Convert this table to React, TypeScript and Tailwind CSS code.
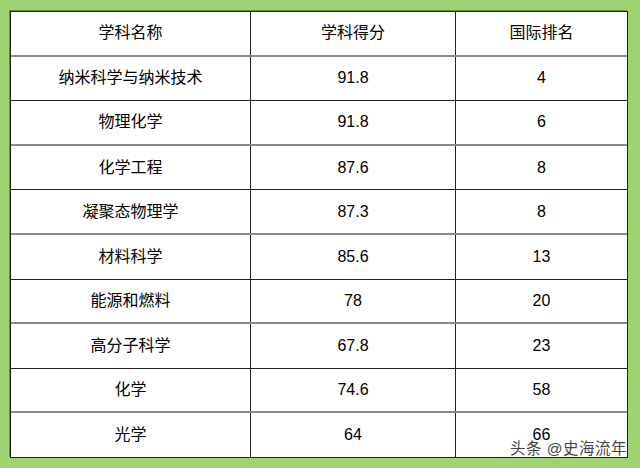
import React from "react";

const rows: [string, string, string][] = [
  ["纳米科学与纳米技术", "91.8", "4"],
  ["物理化学", "91.8", "6"],
  ["化学工程", "87.6", "8"],
  ["凝聚态物理学", "87.3", "8"],
  ["材料科学", "85.6", "13"],
  ["能源和燃料", "78", "20"],
  ["高分子科学", "67.8", "23"],
  ["化学", "74.6", "58"],
  ["光学", "64", "66"],
];

const font = { fontFamily: '"Liberation Sans", "Noto Sans CJK SC", sans-serif' };

function Row({ cells, grey }: { cells: [string, string, string]; grey: boolean }) {
  return (
    <div
      className={
        "flex h-[44.6px] shrink-0 " +
        (grey ? "border-b-2 border-[#8a8a8a]" : "border-b border-[#222]")
      }
    >
      <div className="w-[240px] flex items-center justify-center border-r border-[#222]">
        {cells[0]}
      </div>
      <div className="w-[205px] flex items-center justify-center border-r border-[#222]">
        {cells[1]}
      </div>
      <div className="flex-1 flex items-center justify-center">{cells[2]}</div>
    </div>
  );
}

export default function App() {
  const all: [string, string, string][] = [["学科名称", "学科得分", "国际排名"], ...rows];
  return (
    <div className="w-[640px] h-[468px] bg-[#9fd271] pt-[11px] pl-[10px] relative" style={font}>
      <div className="w-[618px] h-[447px] bg-white border-l border-t border-r border-[#222] flex flex-col text-[16px] text-[#000] overflow-hidden shadow-[-1px_-1px_0_#5f8f3a]">
        {all.map((r, i) => (
          <Row key={i} cells={r} grey={i % 2 === 0} />
        ))}
      </div>
      <div
        className="absolute right-[13px] bottom-[12px] text-[15.5px] leading-none text-[#444] tracking-[0.5px]"
        style={{ ...font, textShadow: "0 0 1px #fff, 0 0 2px #fff, 1px 1px 0 #fff, -1px -1px 0 #fff" }}
      >
        头条 @史海流年
      </div>
    </div>
  );
}
